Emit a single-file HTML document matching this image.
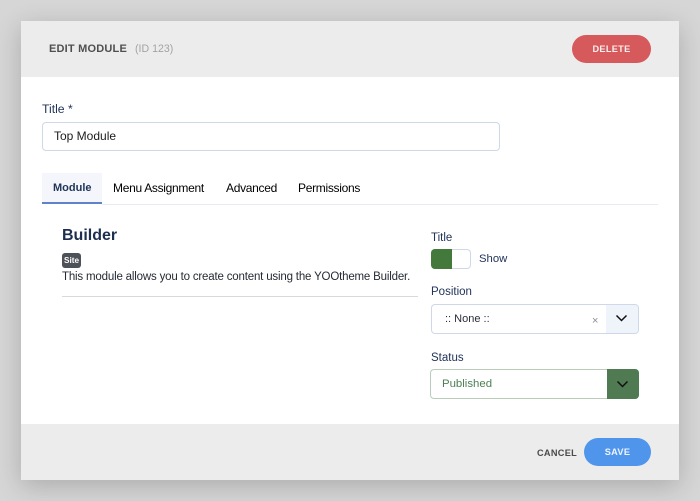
<!DOCTYPE html>
<html>
<head>
<meta charset="utf-8">
<style>
html,body{margin:0;padding:0;width:700px;height:501px;overflow:hidden;background:#d6d6d6;font-family:"Liberation Sans",sans-serif}
.a{position:absolute;white-space:nowrap}
#m{position:absolute;left:21px;top:21px;width:658px;height:459px;background:#fff;box-shadow:0 6px 24px rgba(0,0,0,.2)}
.bar{position:absolute;left:21px;width:658px;height:56px;background:#ececec}
.l{font-size:12.2px;color:#22345a;line-height:14px}
.t{font-size:12.2px;color:#000;line-height:14px}
.box{position:absolute;box-sizing:border-box;border:1px solid #ced8e8;border-radius:4px;background:#fff}
</style>
</head>
<body>
<div id="m"></div>
<div class="bar" style="top:21px"></div>
<div class="bar" style="top:424px"></div>

<div class="a" style="left:49px;top:42px;font-size:11px;font-weight:bold;line-height:14px;color:#4f4f4f;letter-spacing:.2px">EDIT MODULE</div>
<div class="a" style="left:135px;top:42px;font-size:10.6px;line-height:14px;color:#a3a3a3">(ID 123)</div>
<div class="a" style="left:572px;top:35px;width:79px;height:28px;border-radius:14px;background:#d6595c;color:#fbeeee;font-size:9.2px;font-weight:bold;line-height:29px;text-align:center;letter-spacing:.3px">DELETE</div>

<div class="a l" style="left:42px;top:102px">Title *</div>
<div class="box" style="left:42px;top:122px;width:458px;height:29px"></div>
<div class="a t" style="left:54px;top:129px;color:#1c1c1c;font-size:12px">Top Module</div>

<div class="a" style="left:42px;top:173px;width:60px;height:31px;background:#f4f6fb"></div>
<div class="a" style="left:42px;top:202px;width:60px;height:2px;background:#5f83c6"></div>
<div class="a" style="left:102px;top:204px;width:556px;height:1px;background:#e8ebf0"></div>
<div class="a t" style="left:53px;top:181px;font-weight:bold;color:#1f3458;font-size:11px">Module</div>
<div class="a t" style="left:113px;top:181px;font-size:12px;letter-spacing:-.3px">Menu Assignment</div>
<div class="a t" style="left:226px;top:181px;font-size:12px;letter-spacing:-.3px">Advanced</div>
<div class="a t" style="left:298px;top:181px;font-size:12px;letter-spacing:-.3px">Permissions</div>

<div class="a" style="left:62px;top:226px;font-size:16px;line-height:20px;font-weight:bold;color:#1d2f4f">Builder</div>
<div class="a" style="left:62px;top:253px;width:19px;height:15px;border-radius:3px;background:#4d5158;color:#fff;font-size:8.2px;font-weight:bold;line-height:15px;text-align:center">Site</div>
<div class="a" style="left:62px;top:270px;font-size:11.5px;line-height:14px;color:#262b33;letter-spacing:-.18px">This module allows you to create content using the YOOtheme Builder.</div>
<div class="a" style="left:62px;top:296px;width:356px;height:1px;background:#d9d9d9"></div>

<div class="a l" style="left:431px;top:231px;font-size:11.5px">Title</div>
<div class="box" style="left:431px;top:249px;width:40px;height:20px"></div>
<div class="a" style="left:431px;top:249px;width:21px;height:20px;background:#437a3c;border-radius:4px 0 0 4px"></div>
<div class="a l" style="left:479px;top:252px;font-size:11.3px">Show</div>

<div class="a l" style="left:431px;top:285px;font-size:11.5px">Position</div>
<div class="box" style="left:431px;top:304px;width:208px;height:30px"></div>
<div class="a" style="left:606px;top:305px;width:32px;height:28px;background:#eff3fa;border-radius:0 3px 3px 0"></div>
<div class="a" style="left:445px;top:312px;font-size:11px;line-height:14px;color:#2a2f38">:: None ::</div>
<div class="a" style="left:592px;top:314px;font-size:11px;line-height:14px;color:#8a8f96">×</div>
<svg class="a" style="left:615px;top:313px" width="13" height="10" viewBox="0 0 13 10"><path d="M1.5 2.5L6.5 7.5L11.5 2.5" fill="none" stroke="#111" stroke-width="1.5"/></svg>

<div class="a l" style="left:431px;top:351px;font-size:11.5px">Status</div>
<div class="box" style="left:430px;top:369px;width:209px;height:30px;border-color:#b9cdb9"></div>
<div class="a" style="left:607px;top:369px;width:32px;height:30px;background:#4f7a52;border-radius:0 4px 4px 0"></div>
<div class="a" style="left:442px;top:377px;font-size:11.4px;line-height:14px;color:#4c8052">Published</div>
<svg class="a" style="left:616px;top:379px" width="13" height="10" viewBox="0 0 13 10"><path d="M1.5 2.5L6.5 7.5L11.5 2.5" fill="none" stroke="#111" stroke-width="1.5"/></svg>

<div class="a" style="left:537px;top:446px;font-size:9.2px;font-weight:bold;line-height:14px;color:#4a4a4a;letter-spacing:.3px">CANCEL</div>
<div class="a" style="left:584px;top:438px;width:67px;height:28px;border-radius:14px;background:#5095ec;color:#eef5fe;font-size:9.2px;font-weight:bold;line-height:29px;text-align:center;letter-spacing:.3px">SAVE</div>
</body>
</html>
